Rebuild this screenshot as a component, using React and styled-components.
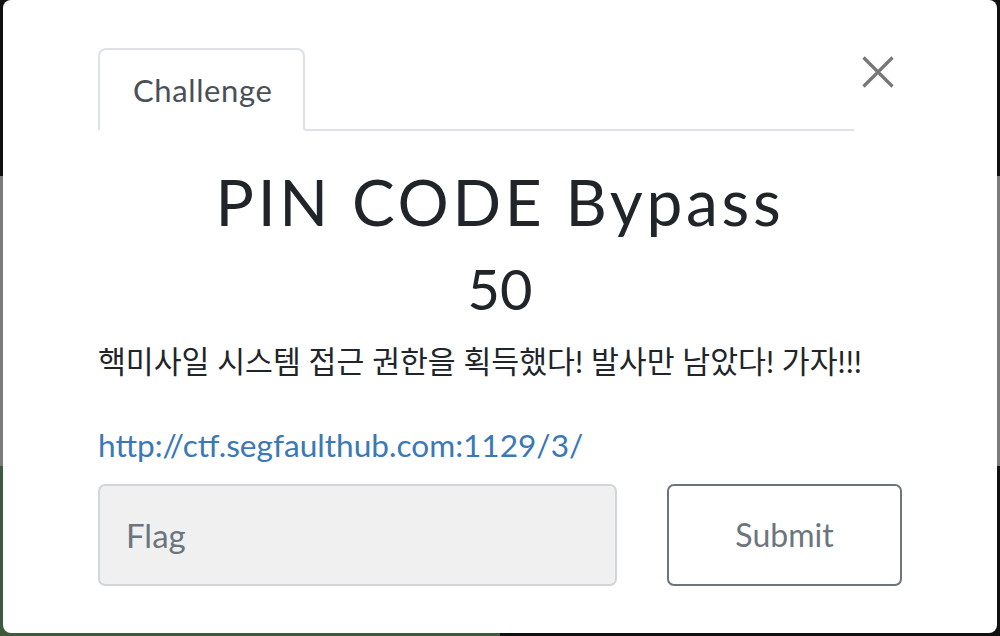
import React, { useState } from 'react';
import styled, { createGlobalStyle } from 'styled-components';

const GlobalStyle = createGlobalStyle`
  html, body {
    margin: 0;
    padding: 0;
    height: 100%;
  }
  body {
    font-family: Lato, "Noto Sans CJK KR", "Noto Sans", sans-serif;
    overflow: hidden;
  }
`;

const Page = styled.div`
  position: relative;
  width: 1000px;
  height: 636px;
  overflow: hidden;
`;

const Backdrop = styled.div`
  display: grid;
  grid-template-rows: 176px 290px 1fr;
  height: 100%;
`;

const Band = styled.div`
  background: ${props => props.color};
`;

const BottomBand = styled.div`
  display: grid;
  grid-template-columns: 1fr 1fr;
  > :first-child {
    background: #3d5a3f;
  }
  > :last-child {
    background: #111;
  }
`;

const Modal = styled.div`
  position: absolute;
  top: 0;
  left: 3px;
  width: 994px;
  height: 633px;
  background: #fff;
  border-radius: 8px;
  box-sizing: border-box;
  padding: 48px 95px 0;
  color: #212529;
`;

const TopRow = styled.div`
  display: flex;
  align-items: flex-start;
`;

const Tabs = styled.div`
  flex: 1;
  display: flex;
  border-bottom: 2px solid #dee2e6;
`;

const Tab = styled.button`
  height: 83px;
  padding: 0 31px 0 33px;
  margin-bottom: -2px;
  background: #fff;
  border: 2px solid #dee2e6;
  border-bottom-color: ${props => (props.active ? '#fff' : '#dee2e6')};
  border-radius: 8px 8px 0 0;
  font-family: Lato, sans-serif;
  font-size: 31px;
  letter-spacing: 0.6px;
  color: #495057;
  cursor: pointer;
`;

const Close = styled.button`
  width: 48px;
  height: 40px;
  margin-top: 4px;
  padding: 0 0 0 8px;
  background: none;
  border: none;
  display: flex;
  align-items: center;
  justify-content: flex-start;
  cursor: pointer;
`;

const Title = styled.h3`
  margin: 33px 0 0;
  text-align: center;
  font-size: 64px;
  font-weight: 400;
  line-height: 1.2;
  letter-spacing: 3.7px;
`;

const Value = styled.h4`
  margin: 14px 0 0;
  text-align: center;
  font-size: 56px;
  font-weight: 400;
  line-height: 1.2;
`;

const Description = styled.p`
  margin: 17px 0 0;
  font-size: 30.3px;
  line-height: 45px;
  font-family: Lato, "Noto Sans CJK KR", sans-serif;
`;

const Link = styled.a`
  display: block;
  margin-top: 37px;
  font-size: 31.6px;
  line-height: 48px;
  color: #3a78b6;
  text-decoration: none;
`;

const FlagRow = styled.form`
  display: flex;
  gap: 50px;
  margin-top: 15px;
`;

const FlagInput = styled.input`
  flex: 1;
  height: 102px;
  box-sizing: border-box;
  padding: 0 26px;
  background: #f0f0f0;
  border: 2px solid #d2d6da;
  border-radius: 7px;
  font-family: Lato, sans-serif;
  font-size: 33px;
  color: #495057;
  outline: none;
  &::placeholder {
    color: #6c757d;
  }
`;

const SubmitButton = styled.button`
  width: 235px;
  height: 102px;
  background: #fff;
  border: 2px solid #6c757d;
  border-radius: 7px;
  font-family: Lato, sans-serif;
  font-size: 32px;
  color: #6c757d;
  cursor: pointer;
`;

const App = () => {
  const [flag, setFlag] = useState('');

  return (
    <Page>
      <GlobalStyle />
      <Backdrop>
        <Band color="#111" />
        <Band color="#7b7b7b" />
        <BottomBand>
          <div />
          <div />
        </BottomBand>
      </Backdrop>
      <Modal>
        <TopRow>
          <Tabs>
            <Tab type="button" active>
              Challenge
            </Tab>
          </Tabs>
          <Close type="button" aria-label="Close">
            <svg width="32" height="32" viewBox="0 0 32 32">
              <path d="M1.5 1.5 L30.5 30.5 M30.5 1.5 L1.5 30.5" stroke="#777" strokeWidth="3.2" />
            </svg>
          </Close>
        </TopRow>
        <Title>PIN CODE Bypass</Title>
        <Value>50</Value>
        <Description>핵미사일 시스템 접근 권한을 획득했다! 발사만 남았다! 가자!!!</Description>
        <Link href="#">http://ctf.segfaulthub.com:1129/3/</Link>
        <FlagRow onSubmit={e => e.preventDefault()}>
          <FlagInput
            placeholder="Flag"
            value={flag}
            onChange={e => setFlag(e.target.value)}
          />
          <SubmitButton type="submit">Submit</SubmitButton>
        </FlagRow>
      </Modal>
    </Page>
  );
};

export default App;
